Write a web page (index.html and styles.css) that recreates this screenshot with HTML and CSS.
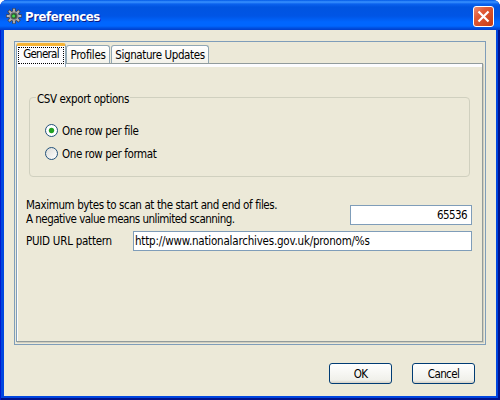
FILE: index.html
```html
<!DOCTYPE html>
<html lang="en">
<head>
<meta charset="utf-8">
<title>Preferences</title>
<link rel="stylesheet" href="styles.css">
</head>
<body>
<div class="window">
  <header class="titlebar">
    <svg class="gear" width="16" height="16" viewBox="0 0 16 16">
      <g stroke="#43434c" stroke-width="3.6"><path d="M8 0.2V15.8M0.2 8H15.8M2.5 2.5L13.5 13.5M13.5 2.5L2.5 13.5"/></g>
      <circle cx="8" cy="8" r="5.4" fill="#50505a"/>
      <g stroke="#b4b4b8" stroke-width="1.8"><path d="M8 0.8V15.2M0.8 8H15.2M3 3L13 13M13 3L3 13"/></g>
      <circle cx="8" cy="8" r="4.1" fill="#66666e" stroke="#a9a9ae"/>
      <circle cx="8" cy="8" r="2.7" fill="#2b5a35"/>
      <circle cx="7.6" cy="8" r="1.5" fill="#42dc48"/>
    </svg>
    <h1 class="title">Preferences</h1>
    <button class="close" aria-label="Close">
      <svg width="21" height="21" viewBox="0 0 21 21">
        <defs><linearGradient id="red" x1="0" y1="0" x2="1" y2="1"><stop offset="0" stop-color="#ee8f76"/><stop offset=".35" stop-color="#e15a36"/><stop offset="1" stop-color="#c43a12"/></linearGradient></defs>
        <rect x=".5" y=".5" width="20" height="20" rx="2.5" fill="url(#red)" stroke="#fff"/>
        <path d="M5.5 5.5L15.5 15.5M15.5 5.5L5.5 15.5" stroke="#fff" stroke-width="2.2"/>
      </svg>
    </button>
  </header>
  <main class="client">
    <section class="tabs">
      <nav class="tablist">
        <button class="tab active"><span class="t-general">General</span></button>
        <button class="tab profiles"><span class="t-profiles">Profiles</span></button>
        <button class="tab signature"><span class="t-signature">Signature Updates</span></button>
      </nav>
      <div class="panel">
        <fieldset class="group">
          <legend><span class="t-legend">CSV export options</span></legend>
          <label class="option"><i class="radio checked"></i><span class="t-file">One row per file</span></label>
          <label class="option"><i class="radio"></i><span class="t-format">One row per format</span></label>
        </fieldset>
        <div class="row scan">
          <p class="note"><span class="t-max">Maximum bytes to scan at the start and end of files.</span><br><span class="t-neg">A negative value means unlimited scanning.</span></p>
          <div class="field number"><span class="t-num">65536</span></div>
        </div>
        <div class="row url">
          <span class="caption"><span class="t-puid">PUID URL pattern</span></span>
          <div class="field pattern"><span class="t-url">http://www.nationalarchives.gov.uk/pronom/%s</span></div>
        </div>
      </div>
    </section>
    <footer class="actions">
      <button class="btn"><span class="t-ok">OK</span></button>
      <button class="btn"><span class="t-cancel">Cancel</span></button>
    </footer>
  </main>
</div>
</body>
</html>
```
FILE: styles.css
```css
* { box-sizing: border-box; }
body {
  margin: 0;
  background: #fff;
  color: #000;
  font: 11.5px/14px "DejaVu Sans Condensed", "DejaVu Sans", sans-serif;
  font-stretch: condensed;
  white-space: nowrap;
}
button { font: inherit; color: inherit; padding: 0; margin: 0; }
.window {
  width: 500px;
  height: 400px;
  padding: 0 4px 4px;
  border-radius: 7px 7px 0 0;
  background: #0046e0;
  box-shadow: inset 1px 0 #0019cf, inset -2px -2px #00138c;
}
.titlebar {
  height: 30px;
  margin: 0 -4px;
  padding: 2px 4px 0 6px;
  display: flex;
  align-items: center;
  border-radius: 7px 7px 0 0;
  background: linear-gradient(#0058e6 0, #3a93ff 2px, #0a62ee 4px, #0054e0 7px, #0055e5 16px, #0066ff 22px, #0066ff 26px, #0050e0 28px, #003dcc 30px);
}
.title {
  flex: 1;
  margin: 1px 0 0 3px;
  color: #fff;
  font: bold 13px/16px "DejaVu Sans Condensed", sans-serif;
  font-stretch: condensed;
  text-shadow: 1px 1px #0a1883;
  letter-spacing: -0.4px;
}
.close { width: 21px; height: 21px; margin: 1px 2px 0 0; border: 0; background: none; }
.close svg { display: block; }
.client { height: 366px; padding: 11px 10px 0; background: #ece9d8; }
.tabs {
  height: 304px;
  padding: 1px 2px 2px 1px;
  border: 1px solid #7f9db9;
}
.tablist { display: flex; align-items: flex-end; height: 20px; }
.tab {
  height: 18px;
  border: 1px solid #91a7b4;
  border-bottom: 0;
  border-radius: 3px 3px 0 0;
  background: linear-gradient(#fff, #f3f2ea);
}
.tab.active {
  position: relative;
  z-index: 1;
  width: 50px;
  height: 24px;
  margin: 0 0 -4px 0;
  padding: 0 1px 3px;
  border-top: 3px solid #f5b335;
  border-left-color: #7f9db9;
  background: #fcfcfe;
}
.tab.active span { display: block; height: 17px; border: 1px dotted #000; line-height: 13px; }
.tab.profiles { width: 44px; }
.tab.signature { width: 98px; margin-left: 1px; }
.panel {
  height: 279px;
  padding: 27px 10px 0 12px;
  border: 1px solid #919b9c;
  border-left-color: #7f9db9;
  box-shadow: inset 1px 0 #fcfcfe, inset 0 3px #fcfcfe, 1px 1px #d0cebf;
}
.group {
  height: 86px;
  margin: 0 2px 0 0;
  padding: 15px 0 0 15px;
  border: 1px solid #d0d0bf;
  border-radius: 4px;
}
.group legend { height: 13px; padding: 0 1px; margin-left: -9px; line-height: 17px; }
.option { display: flex; align-items: center; height: 23px; gap: 4px; }
.radio {
  width: 13px;
  height: 13px;
  border: 1px solid #21517b;
  border-radius: 50%;
  background: linear-gradient(135deg, #dcdcd7, #fff);
}
.radio.checked { background: radial-gradient(circle, #21a121 0 2.2px, #fff 3.2px); }
.row { display: flex; margin-left: -3px; }
.scan { margin-top: 21px; justify-content: space-between; }
.note { margin: 0; line-height: 14px; }
.field { height: 20px; border: 1px solid #7f9db9; background: #fff; line-height: 18px; }
.number { width: 122px; margin-top: 7px; padding-right: 4px; text-align: right; }
.url { margin-top: 5px; align-items: center; }
.caption { width: 107px; }
.pattern { flex: 1; padding-left: 1px; }
.actions { display: flex; justify-content: flex-end; gap: 20px; padding: 18px 11px 0 0; }
.btn {
  width: 63px;
  height: 21px;
  border: 1px solid #003c74;
  border-radius: 3px;
  background: linear-gradient(#fff, #f0f0ea 85%, #d6d0c5);
}
.t-general { letter-spacing: -0.75px; }
.t-profiles { letter-spacing: -0.3px; }
.t-signature, .t-file, .t-format, .t-max, .t-legend { letter-spacing: -0.39px; }
.t-neg { letter-spacing: -0.52px; }
.t-puid { letter-spacing: -0.25px; }
.t-url { letter-spacing: -0.21px; }
.t-num, .t-cancel, .t-ok { letter-spacing: -0.6px; }
```
